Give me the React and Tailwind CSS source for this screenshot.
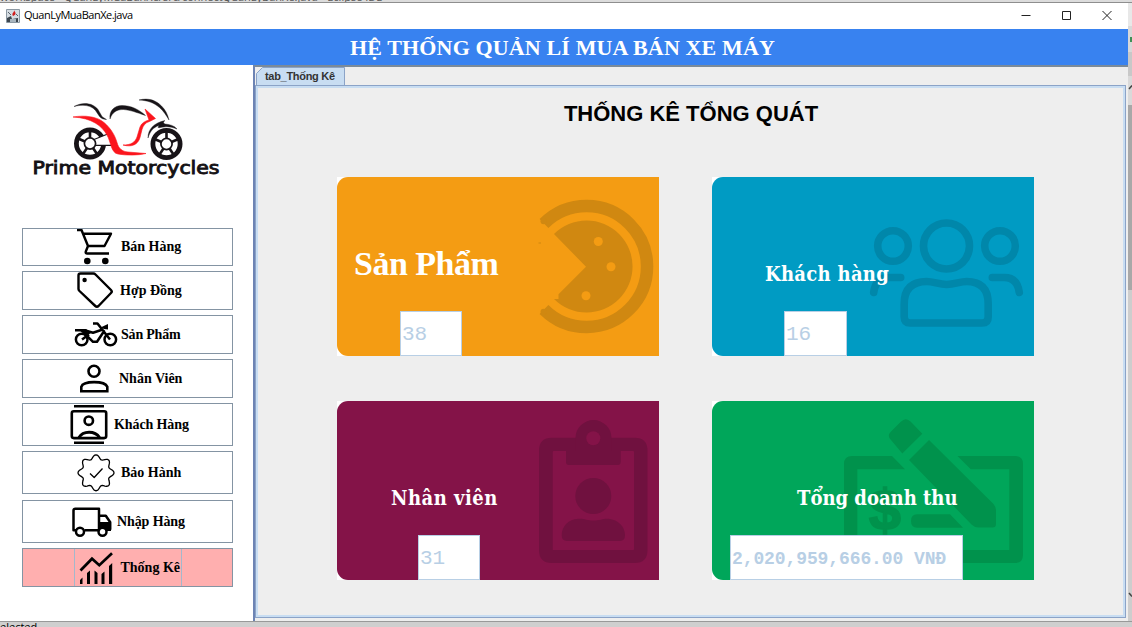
import React from 'react';

const lobes = (cx, cy, outer, inner, n) => {
  const steps = n * 12;
  const pts = [];
  for (let i = 0; i < steps; i++) {
    const a = (i / steps) * Math.PI * 2 - Math.PI / 2;
    const k = (Math.cos(a * n + (Math.PI / 2) * n) + 1) / 2;
    const r = inner + (outer - inner) * k;
    pts.push(`${(cx + r * Math.cos(a)).toFixed(2)} ${(cy + r * Math.sin(a)).toFixed(2)}`);
  }
  return `M${pts.join('L')}Z`;
};

const line = { fill: 'none', stroke: '#000', strokeLinejoin: 'round' };

const CartIcon = () => (
  <svg width="40" height="36" viewBox="74 229 40 36" className="shrink-0">
    <path {...line} strokeWidth="2.4" d="M77 230h4.500l6.500 16-2.200 5.500q-.6 2 1.500 2H109M82.500 233.700H111L104.500 246H88" />
    <circle cx="87.300" cy="261" r="3.300" /><circle cx="105.300" cy="261" r="3.300" />
  </svg>
);
const TagIcon = () => (
  <svg width="40" height="37" viewBox="74 272 40 37" className="shrink-0">
    <path {...line} strokeWidth="2.400" d="M80.500 273.500H93.500q1 0 2 1L111 290q1.500 1.500 0 3L98.500 306q-1.600 1.500-3.200 0L79.500 291q-1-1-1-2v-13.500q0-2 2-2Z" />
    <circle cx="84.600" cy="280" r="2.200" />
  </svg>
);
const BikeIcon = () => (
  <svg width="46" height="30" viewBox="73 320 46 30" className="shrink-0">
    <g {...line} strokeWidth="2.500">
      <circle cx="81.700" cy="339.500" r="5.800" /><circle cx="110.300" cy="339.500" r="5.800" />
      <path d="M93 323.400h4.500L110 339.500M75 330.300h9.500l8.500 2.500 9-3 2 1.500-7 10.500h-4l-8.500-8.500" />
      <path d="M82 339.500l7-5" />
    </g>
    <path d="M100.500 327.500l7.500-3.500v5.500l-4-.5zM78 329h8l5 4-5 3z" />
  </svg>
);
const PersonIcon = () => (
  <svg width="32" height="32" viewBox="78 363 32 32" className="shrink-0">
    <g {...line} strokeWidth="2.600" strokeLinejoin="miter"><circle cx="94" cy="371.300" r="5.500" /><path d="M81.300 391.300v-4.500c2-6.200 23.500-6.200 26 0v4.500Z" /></g>
  </svg>
);
const ContactsIcon = () => (
  <svg width="40" height="41" viewBox="69 404 40 41" className="shrink-0">
    <g {...line} strokeWidth="2.600"><path d="M74 406.200h30M74 442.700h30" /><rect x="71.800" y="411.300" width="34.400" height="26.800" rx="2" /><circle cx="88.800" cy="420.700" r="4.200" /><path d="M79 437.500c4-7 16-7 20.500 0" strokeWidth="3" /></g>
  </svg>
);
const BadgeIcon = () => (
  <svg width="40" height="40" viewBox="76 453 40 40" className="shrink-0">
    <g {...line} strokeWidth="1.300"><path d={lobes(96, 472.8, 18, 13.9, 8)} /><path d="M90 473.500l4.200 4 8.300-9" /></g>
  </svg>
);
const TruckIcon = () => (
  <svg width="42" height="34" viewBox="71 504 42 34" className="shrink-0">
    <g {...line} strokeWidth="2.500"><path d="M76 529.300h-2.500V509.500q0-1.800 1.800-1.800H99v21.600H84.500M100 514.800h5.800l4.400 6.500v7.500" /><circle cx="80" cy="530.700" r="4" /><circle cx="102.500" cy="530.700" r="4" /></g>
    <path d="M99 521h12v9h-4.500q-4-6-7.500-1z" />
  </svg>
);
const ChartIcon = () => (
  <svg width="36" height="34" viewBox="79 550 36 34" className="shrink-0">
    <path d="M80.500 569.500L92 557.700l7.300 6.500L112 552.300" fill="none" stroke="#000" strokeWidth="2.700" />
    <path d="M80 579l2.500-2.500v6.500H80zM87 572l3-2.500V583h-3zM94.500 569.500l3 2.500v11h-3zM101.500 573l3-2.500V583h-3zM109 565l3.200-3v21h-3.200z" />
  </svg>
);

const MENU = [
  { label: 'Bán Hàng', Icon: CartIcon, box: 'h-[38px] pl-[51px]', text: 'ml-[7px] mb-[2px]' },
  { label: 'Hợp Đồng', Icon: TagIcon, box: 'h-[39px] pl-[51px]', text: 'ml-[6px]' },
  { label: 'Sản Phẩm', Icon: BikeIcon, box: 'h-[39px] pl-[50px]', text: 'ml-[2px] tracking-[-0.2px]' },
  { label: 'Nhân Viên', Icon: PersonIcon, box: 'h-[39px] pl-[55px]', text: 'ml-[9px]' },
  { label: 'Khách Hàng', Icon: ContactsIcon, box: 'h-[43px] pl-[46px]', text: 'ml-[5px] tracking-[-0.1px]' },
  { label: 'Bảo Hành', Icon: BadgeIcon, box: 'h-[43px] pl-[53px]', text: 'ml-[5px]' },
  { label: 'Nhập Hàng', Icon: TruckIcon, box: 'mt-px h-[43px] pl-[48px]', text: 'ml-[4px] tracking-[-0.1px]' },
];

function MenuLabel({ className, children }) {
  return <span className={`whitespace-nowrap font-['Liberation_Serif',serif] text-[14px] font-bold text-black ${className}`}>{children}</span>;
}

function Logo() {
  return (
    <svg width="196" height="90" viewBox="28 93 196 90">
      <g fill="none" stroke="#171317">
        <circle cx="90" cy="143.500" r="13.600" strokeWidth="4.800" />
        <circle cx="90" cy="143.500" r="5.600" strokeWidth="1.700" />
        <path strokeWidth="2.600" d="M90 138v-7M85 141.500l-7-3M87 148l-4 6M93 148l4 6" />
        <circle cx="166.500" cy="144" r="13.600" strokeWidth="4.800" />
        <circle cx="166.500" cy="144" r="5.600" strokeWidth="1.700" />
        <path strokeWidth="2.600" d="M166.500 138.500v-7M161.500 142l-7-3M163.500 148.500l-4 6M169.500 148.500l4 6M171.500 142l7-3" />
      </g>
      <path fill="#fff" d="M98 138l14-6 4 14H98z" />
      <path fill="none" stroke="#171317" strokeWidth="1.200" d="M94 139.500l15-6M95 145.300h17" />
      <g fill="#171317" stroke="#171317" strokeWidth=".4">
        <path d="M74 106.500c9-5 19-3.500 24 3l4 7c1 1 3 2 4.500 3-3-.3-5.500-1-7-3l-4-6c-4-5-12-6.500-21.500-4z" />
        <path d="M110 119c-1-8 4-13.500 12-13.500 9 0 17 4 23.500 10-9-3-15-5.500-22-6-7 0-11 2.500-13.500 9.500z" />
        <path d="M139 100c10-2.500 17 .5 22.500 6 4 4 6 8 7.500 14-3-5-5.500-9-9.500-12.500-6-5-12-7-20.500-7.500z" />
        <path d="M148 138c0-9 6-15 17-17.500-2 1.500-2 2.500 0 3.500 5 .5 9 1.500 12 5-5-2-9-2.500-13-2-2 0-4 1-6 .5l1-2c-6 2-9 6-11 12.500z" />
      </g>
      <g fill="#fb151d" stroke="#fb151d" strokeWidth=".6">
        <path d="M73 117c12-2 24-.5 31 5.500 7 6 11 13 13 20 1.500 6 5 9 11 9.500l18 1.500c-8 2-20 2-28 .5-7-1-7-12-11-19-5-9-15-17-34-18z" />
        <path d="M123 145c8 0 12-2.500 14-8l3-10c1.500-4 5-6 9-7l-4-11 10.500 9.500-6 3c-4 1-6.500 4-7.500 8l-2 8c-2 7-8 10-17 7.500z" />
      </g>
      <text x="32.500" y="174" textLength="187" lengthAdjust="spacingAndGlyphs" fill="#141114" stroke="#141114" strokeWidth=".9" fontFamily="'DejaVu Sans', sans-serif" fontSize="18">Prime Motorcycles</text>
    </svg>
  );
}

const Pizza = () => (
  <svg viewBox="337 177 322 179" className="absolute inset-0 h-full w-full">
    <path d="M544 223.500A60.500 60.500 0 1 1 544 309.500" fill="none" stroke="#d08811" strokeWidth="12.500" />
    <circle cx="543.500" cy="221.300" r="3" fill="#d08811" /><circle cx="543.500" cy="311.700" r="3" fill="#d08811" />
    <path d="M586 266.700L554 234a46 46 0 1 1 0 65h4.500v-4.800z" fill="#d08811" />
    <g fill="#f49c13"><circle cx="598.300" cy="241.500" r="4.500" /><circle cx="611" cy="266.700" r="4.500" /><circle cx="586" cy="295.700" r="4.500" /></g>
    <path d="M538.500 243h2.500" stroke="#d08811" />
  </svg>
);
const People = () => (
  <svg viewBox="712 177 322 179" className="absolute inset-0 h-full w-full">
    <g fill="none" stroke="#0087aa" strokeWidth="7.600" strokeLinecap="round">
      <circle cx="946.500" cy="246" r="23" /><circle cx="893" cy="246" r="15.300" /><circle cx="1000" cy="246" r="15.300" />
      <path d="M904.200 304q0-22.500 22.500-22.500c7 0 12 3 20 3s13-3 20-3q21.500 0 21.500 22.500v13q0 6-6 6h-72q-6 0-6-6z" />
      <path d="M873.700 292.500q2-15 15-15h12M1019.300 292.500q-2-15-15-15h-12" />
    </g>
  </svg>
);
const Clipboard = () => (
  <svg viewBox="337 400 322 179" className="absolute inset-0 h-full w-full">
    <g fill="#70113f">
      <path fillRule="evenodd" d="M552 436.800h82.500q13 0 13 13V549q0 13-13 13H552q-13 0-13-13v-99.200q0-13 13-13zM552.700 451v98h80.600q.7 0 .7-1v-97q0-1-1-1h-79.300q-1 0-1 1z" />
      <path d="M566 450h9.500v-13a18 18 0 0 1 36 0v13h9.200v11q0 3-3 3H569q-3 0-3-3z" />
      <circle cx="593.300" cy="495" r="18" />
      <path d="M578 517.800c6-.5 9 1.800 15.500 1.800s10-2.300 15-1.800c10 1 16.500 8 16.500 16.500q0 5.700-5 5.700h-53q-5.300 0-5.300-5.700c0-9 7-16 16.300-16.500z" />
    </g>
    <circle cx="593.300" cy="437.300" r="7" fill="#841348" />
  </svg>
);
const Cheque = () => (
  <svg viewBox="712 400 322 179" className="absolute inset-0 h-full w-full">
    <g fill="#00924c">
      <path d="M892 455h-40q-8 0-8 8v91q0 8 8 8h163q8 0 8-8v-91q0-8-8-8h-57.500l13.300 13.300h38.500V549h-152v-80.700H905z" />
      <path d="M902.300 452.500l20-19.800-11.500-12q-5-5-10 0l-10 10q-4 4 0 8zM909 459l20-20 64.500 64q2.500 3 2.500 7v13q0 3.500-3.500 3.500h-14q-4 0-7-3z" />
      <path d="M917 513.300h33l13 13.400h-46q-6 0-6-6.700t6-6.700z" />
      <text x="885" y="529" textAnchor="middle" stroke="#00924c" strokeWidth="1.500" fontFamily="'Liberation Sans', sans-serif" fontWeight="700" fontSize="58">$</text>
    </g>
  </svg>
);

function Card({ color, art, label, labelClass, value, valueClass }) {
  return (
    <div className="h-[179px] w-[322px] bg-white">
      <section className={`relative flex h-full flex-col items-start justify-end rounded-l-[11px] ${color}`}>
        {art}
        <h2 className={`relative whitespace-nowrap font-bold text-white ${labelClass}`}>{label}</h2>
        <div className={`relative flex h-[45px] items-center border border-[#b8cfe5] bg-white pl-px pt-[3px] font-['Liberation_Mono',monospace] whitespace-nowrap text-[#b8cfe5] ${valueClass}`}>{value}</div>
      </section>
    </div>
  );
}

function TitleBar() {
  return (
    <header className="flex h-[26px] items-center bg-white pl-[6px]">
      <svg width="14" height="14" viewBox="0 0 14 14">
        <path d="M.5.500h13v13H.5z" fill="#d5dce2" stroke="#8b98a3" />
        <path d="M1 9l4-2 1 3 6-1v4H1z" fill="#3d464e" /><path d="M4 10h6v3H4z" fill="#a9b6c0" />
        <path d="M8 1c1 2-3 3-1 6 3-1 3-3 2-4z" fill="#d01c1c" /><path d="M2 3l3 3M10 5l2 2" stroke="#59636c" />
      </svg>
      <span className="ml-[4px] pb-px font-['Open_Sans','Noto_Sans',sans-serif] text-[11px] tracking-[-0.5px] text-black">QuanLyMuaBanXe.java</span>
      <svg className="ml-auto mr-[14px]" width="94" height="12" viewBox="0 0 94 12" fill="none" stroke="#222">
        <path d="M1.500 5.500h9M42.500 1.500h8v8h-8z" /><path d="M82.500 1l9 9M91.500 1l-9 9" />
      </svg>
    </header>
  );
}

function OuterScrollbar() {
  return (
    <div className="flex w-[4px] flex-col bg-[#cdcdcd]">
      <div className="h-[23px] bg-[#e8e8e8]" />
      <div className="flex h-[26px] items-center justify-end bg-[#d8d8d8]"><span className="h-[5px] w-[2px] bg-[#3f8f56]" /></div>
      <div className="h-[24px] bg-[#c8c8c8]" />
      <svg width="4" height="29" viewBox="0 0 4 29"><path d="M0 0h4v29H0z" fill="#d9d9d9" /><path d="M1 13l3-3.500" stroke="#444" strokeWidth="1.500" /></svg>
      <div className="h-[185px] bg-[#a8a8a8]" />
      <svg className="mt-auto mb-[21px]" width="4" height="10" viewBox="0 0 4 10"><path d="M1 3l3 3.500" stroke="#444" strokeWidth="1.500" /></svg>
    </div>
  );
}

export default function App() {
  return (
    <div className="flex h-[627px] w-[1132px] flex-col overflow-hidden bg-[#cfcfcf]">
      <div className="h-[3px] overflow-hidden border-b border-[#8e8e8e] bg-[#dcdcdc]">
        <p className="mt-[-9px] whitespace-nowrap font-['Open_Sans',sans-serif] text-[11px] leading-[12px] text-[#555]">workspace - QuanLyMuaBanXe/src/connectQuanLyBanXe.java - Eclipse IDE</p>
      </div>
      <div className="flex h-[618px]">
        <main className="flex w-[1128px] flex-col bg-white">
          <TitleBar />
          <h1 className="flex h-[36px] items-center justify-center bg-[#3882f0] pr-[3px] font-['Liberation_Serif',serif] text-[22px] font-bold tracking-[0.14px] text-white">HỆ THỐNG QUẢN LÍ MUA BÁN XE MÁY</h1>
          <div className="flex h-[556px]">
            <aside className="flex w-[253px] flex-col bg-white">
              <div className="flex h-[163px] pl-[28px] pt-[28px]"><Logo /></div>
              <nav className="flex w-[233px] flex-col gap-[5px] pl-[22px]">
                {MENU.map(({ label, Icon, box, text }) => (
                  <button key={label} className={`flex items-center border border-[#8494a3] bg-white ${box}`}>
                    <Icon />
                    <MenuLabel className={text}>{label}</MenuLabel>
                  </button>
                ))}
                <button className="flex h-[39px] justify-center border border-[#8494a3] bg-[#ffafaf]">
                  <span className="flex h-full w-[108px] items-center border-x border-[#a3b8cc] pl-[4px]">
                    <ChartIcon />
                    <MenuLabel className="ml-[6px]">Thống Kê</MenuLabel>
                  </span>
                </button>
              </nav>
            </aside>
            <div className="flex w-[875px] flex-col border-l-2 border-t-2 border-l-[#6d84b4] border-t-[#7a8a99] bg-[#eee]">
              <div className="flex h-[18px] items-end pl-px pt-px">
                <svg width="89" height="18" viewBox="0 0 89 18" className="absolute">
                  <path d="M.5 18V6.500L6.500.5H88.500V18" fill="#c8ddf2" stroke="#8ba3c7" />
                </svg>
                <span className="relative pl-[9px] font-['Liberation_Sans',sans-serif] text-[11px] font-bold leading-[17px] tracking-[-0.3px] text-[#333]">tab_Thống Kê</span>
              </div>
              <div className="mr-[2px] flex h-[533px] flex-col items-center border border-[#8ba3c7] bg-[#c8ddf2] p-[2px]">
                <div className="flex h-full w-full flex-col bg-[#eee] pl-[79px]">
                  <h2 className="mt-[12px] w-[708px] text-center font-['Liberation_Sans',sans-serif] text-[22px] font-bold leading-[28px] text-black">THỐNG KÊ TỔNG QUÁT</h2>
                  <div className="mt-[49px] grid grid-cols-[322px_322px] gap-x-[53px] gap-y-[45px]">
                    <Card color="bg-[#f49c13]" art={<Pizza />} label="Sản Phẩm" labelClass="ml-[17px] mb-[22px] font-['Liberation_Serif',serif] text-[34px] leading-[50px] tracking-[-0.5px]" value="38" valueClass="ml-[63px] w-[62px] text-[21px]" />
                    <Card color="bg-[#009bc3]" art={<People />} label="Khách hàng" labelClass="ml-[53px] mb-[21px] font-['DejaVu_Serif_Condensed','DejaVu_Serif',serif] text-[20px] leading-[32px] tracking-[0.3px]" value="16" valueClass="ml-[72px] w-[63px] text-[21px]" />
                    <Card color="bg-[#841348]" art={<Clipboard />} label="Nhân viên" labelClass="ml-[54px] mb-[21px] font-['DejaVu_Serif_Condensed','DejaVu_Serif',serif] text-[20px] leading-[32px] tracking-[0.5px]" value="31" valueClass="ml-[81px] w-[62px] text-[21px]" />
                    <Card color="bg-[#00a65a]" art={<Cheque />} label="Tổng doanh thu" labelClass="ml-[85px] mb-[21px] font-['DejaVu_Serif_Condensed','DejaVu_Serif',serif] text-[20px] leading-[32px]" value="2,020,959,666.00 VNĐ" valueClass="ml-[18px] w-[233px] text-[18px] font-bold tracking-[-0.1px]" />
                  </div>
                </div>
              </div>
            </div>
          </div>
        </main>
        <OuterScrollbar />
      </div>
      <footer className="h-[6px] overflow-hidden border-t border-[#999] bg-[#cfcfcf]">
        <p className="font-['Open_Sans',sans-serif] text-[11px] leading-[10px] text-black">elected</p>
      </footer>
    </div>
  );
}
